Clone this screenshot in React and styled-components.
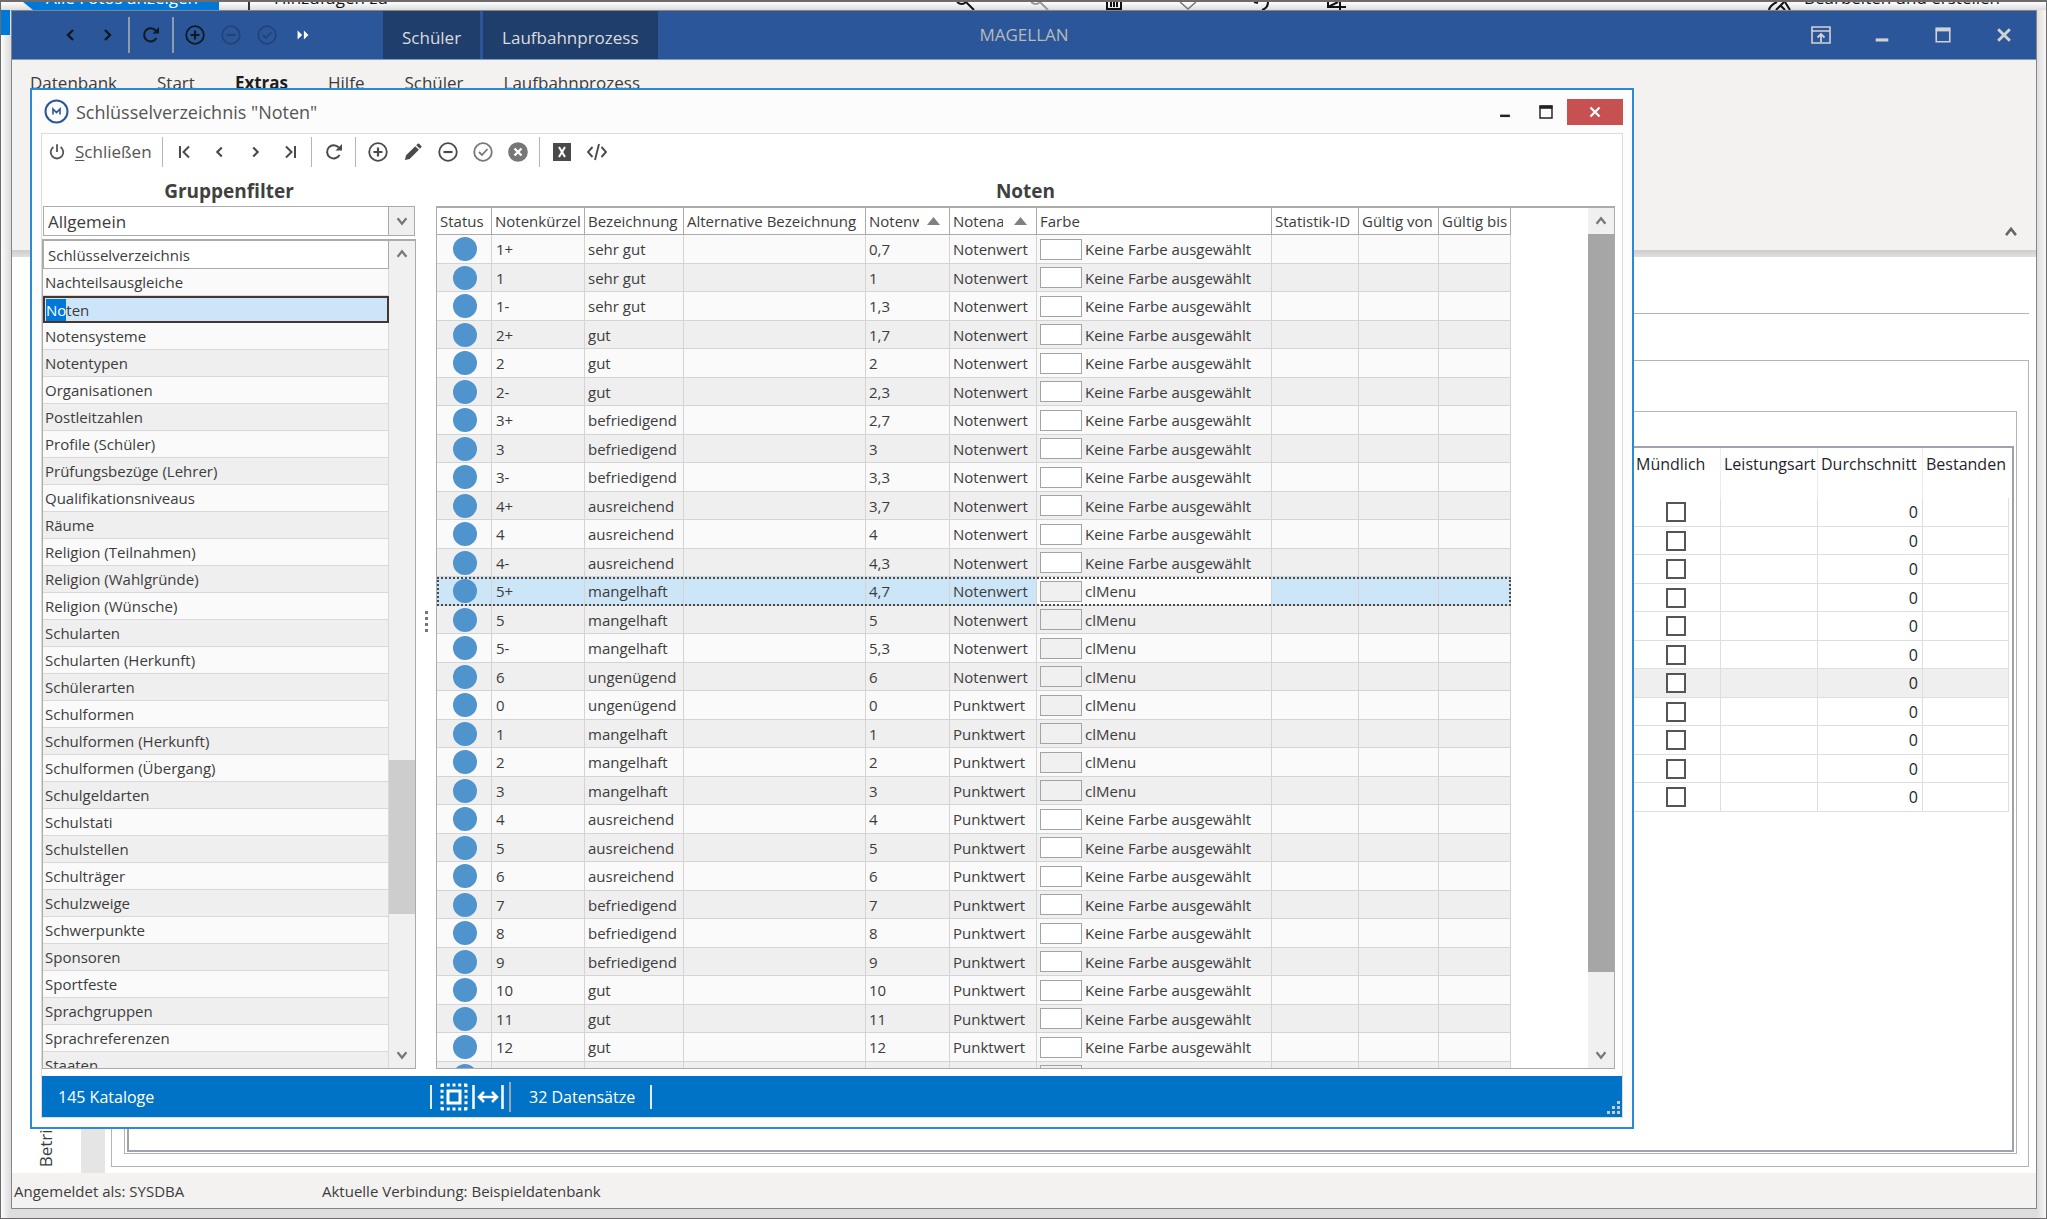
import React from "react";
import styled, { createGlobalStyle, css } from "styled-components";

const GlobalStyle = createGlobalStyle`
  * {
    box-sizing: border-box;
  }
  body {
    margin: 0;
    overflow: hidden;
    font-family: "Open Sans", "Noto Sans", sans-serif;
    font-size: 17px;
    color: #3c3c3c;
  }
  button, select, input {
    font: inherit;
    color: inherit;
    margin: 0;
  }
  button {
    border: 0;
    padding: 0;
    background: none;
  }
`;

/* ---------- desktop + photo app behind ---------- */

const Desktop = styled.div`
  position: relative;
  display: flex;
  flex-direction: column;
  height: 100vh;
  padding: 0 9px 9px 10px;
  border: 1px solid #6f6b6c;
  border-top-width: 2px;
  background: linear-gradient(to right, #fdfdfd, #dedede 9px, #dedede calc(100% - 9px), #f7f7f7);
`;

const PhotoBar = styled.div`
  display: flex;
  align-items: flex-end;
  height: 8px;
  margin: 0 -9px 0 -10px;
  padding-left: 22px;
  overflow: hidden;
  color: #111;
  line-height: 24px;
  background: linear-gradient(#ffffff, #dcdcdc);
`;

const PhotoAll = styled.span`
  width: 186px;
  padding-left: 13px;
  color: #fff;
  background: #0078d7;
`;

const PhotoAdd = styled.span`
  margin-left: 29px;
  padding-left: 24px;
  border-left: 2px solid #333;
`;

const PhotoTools = styled.span`
  display: flex;
  align-items: flex-end;
  gap: 50px;
  margin: 0 auto 0 auto;
  padding-left: 146px;
`;

const PhotoEdit = styled.span`
  display: flex;
  align-items: flex-end;
  gap: 12px;
  padding-right: 46px;
`;

const PhotoEdge = styled.div`
  position: absolute;
  left: 0;
  top: 8px;
  width: 9px;
  height: 25px;
  background: #0078d7;
`;

/* ---------- main window ---------- */

const MainWindow = styled.div`
  flex: 1;
  min-height: 0;
  display: flex;
  flex-direction: column;
  border: 1px solid #858585;
  background: #fff;
`;

const TitleBar = styled.header`
  display: grid;
  grid-template-columns: 1fr auto 1fr;
  align-items: stretch;
  height: 49px;
  background: #2b579a;
  border-bottom: 1px solid #7f9cc9;
  color: #b9b9b9;
`;

const QuickBar = styled.div`
  display: flex;
  align-items: center;
  padding-left: 41px;
  color: #101820;
`;

const QuickButton = styled.button`
  display: flex;
  justify-content: center;
  align-items: center;
  width: 36px;
  height: 36px;
  color: ${p => (p.$light ? "#fff" : "inherit")};
  opacity: ${p => (p.$off ? 0.3 : 1)};
`;

const QuickSep = styled.span`
  width: 2px;
  height: 36px;
  margin: 0 3px;
  background: #8e9bb0;
`;

const ContextTabs = styled.div`
  display: flex;
  align-self: stretch;
  gap: 3px;
  margin-left: 62px;
`;

const ContextTab = styled.button`
  padding: 4px 19px 0;
  color: #dcdcdc;
  background: #1f3e6c;
`;

const AppTitle = styled.span`
  align-self: center;
  line-height: 24px;
`;

const WindowButtons = styled.div`
  display: flex;
  justify-content: flex-end;
  align-items: center;
  padding-right: 2px;
  color: #d2d2d2;
`;

const WindowButton = styled.button`
  display: flex;
  justify-content: center;
  align-items: center;
  width: 61px;
  height: 36px;
`;

const Ribbon = styled.div`
  display: flex;
  justify-content: space-between;
  align-items: flex-end;
  height: 190px;
  padding-right: 16px;
  background: #f3f2f1;
`;

const RibbonMenu = styled.nav`
  display: flex;
  align-self: flex-start;
  gap: 40px;
  padding: 11px 0 0 18px;
  line-height: 24px;
`;

const MenuButton = styled.button`
  font-weight: ${p => (p.$active ? 700 : 400)};
  color: ${p => (p.$active ? "#1e1e1e" : "#3c3c3c")};
`;

const CollapseButton = styled.button`
  color: #666;
  margin-bottom: 4px;
`;

const RibbonShadow = styled.div`
  height: 7px;
  background: linear-gradient(#cdcdcd, #e0e0e0);
`;

const Work = styled.main`
  flex: 1;
  min-height: 0;
  display: flex;
`;

const SideTabs = styled.div`
  display: flex;
  align-items: flex-end;
  justify-content: flex-end;
  width: 93px;
  border-right: 24px solid #e5e5e5;
`;

const SideTab = styled.button`
  writing-mode: vertical-rl;
  transform: rotate(180deg);
  margin: 0 24px 6px 0;
  font-size: 17px;
  line-height: 22px;
`;

const Panels = styled.div`
  flex: 1;
  display: flex;
  flex-direction: column;
  padding: 0 7px 6px 6px;
`;

const Divider = styled.div`
  height: 57px;
  border-bottom: 1px solid #b4b4b4;
`;

const OuterPanel = styled.div`
  flex: 1;
  display: flex;
  margin-top: 46px;
  padding: 50px 11px 12px 12px;
  border: 1px solid #b4b4b4;
`;

const InnerPanel = styled.div`
  flex: 1;
  display: flex;
  padding: 34px 2px 1px;
  border: 1px solid #b4b4b4;
`;

const GradePanel = styled.div`
  flex: 1;
  display: flex;
  justify-content: flex-end;
  align-items: flex-start;
  padding-right: 3px;
  border: 2px solid #9ea2aa;
`;

const BackTable = styled.table`
  table-layout: fixed;
  width: 381px;
  border-spacing: 0;
  font-size: 16px;
  line-height: 20px;
  color: #1f1f2b;

  th {
    height: 50px;
    padding: 6px 0 0 3px;
    font-weight: 400;
    text-align: left;
    vertical-align: top;
    white-space: nowrap;
    border-right: 1px solid #ececec;
  }
  th:first-child {
    padding-left: 8px;
  }
  th:last-child {
    border-right: 0;
  }
  td {
    height: 29px;
    padding: 0 4px;
    text-align: right;
    border-right: 1px solid #dedede;
    border-bottom: 1px solid #dedede;
  }
  td:first-child {
    text-align: center;
  }
  tbody tr:nth-child(even) td {
    height: 28px;
  }
  tbody tr:nth-child(7) td {
    background: #efefef;
  }
`;

const Tick = styled.input`
  appearance: none;
  display: block;
  width: 20px;
  height: 20px;
  margin: 0 0 0 34px;
  border: 2px solid #555;
  background: #fff;
`;

const MainStatus = styled.footer`
  display: grid;
  grid-template-columns: 308px 1fr;
  align-items: center;
  height: 35px;
  padding-left: 2px;
  background: #f3f2f1;
  font-size: 15px;
`;

/* ---------- dialog ---------- */

const Dialog = styled.section`
  position: absolute;
  inset: 86px 412px 89px 29px;
  display: flex;
  flex-direction: column;
  padding: 0 9px 9px;
  border: 2px solid #2b8ad6;
  background: #fcfcfc;
`;

const DialogTitle = styled.header`
  display: flex;
  align-items: center;
  height: 43px;
  padding-left: 3px;
  color: #555;

  h1 {
    flex: 1;
    margin: 0 0 0 7px;
    font-size: 18px;
    font-weight: 400;
  }
`;

const DialogButton = styled.button`
  display: flex;
  justify-content: center;
  align-items: center;
  width: 41px;
  height: 26px;
  color: #222;
`;

const CloseButton = styled(DialogButton)`
  width: 56px;
  margin-left: 1px;
  background: #c75050;
  color: #fff;
`;

const DialogBody = styled.div`
  flex: 1;
  min-height: 0;
  display: flex;
  flex-direction: column;
  border: 1px solid #dcdcdc;
  background: #fff;
`;

const Toolbar = styled.div`
  display: flex;
  align-items: center;
  height: 35px;
  color: #4a4a4a;
`;

const LeaveButton = styled.button`
  display: flex;
  align-items: center;
  gap: 9px;
  width: 116px;
  padding-left: 6px;
  color: #555;

  u {
    text-underline-offset: 2px;
  }
`;

const ToolButton = styled.button`
  display: flex;
  justify-content: center;
  align-items: center;
  width: 35px;
  height: 30px;
  opacity: ${p => (p.$off ? 0.75 : 1)};
`;

const ToolSep = styled.span`
  width: 1px;
  height: 30px;
  margin: 0 4px;
  background: #b5b5b5;
`;

const Columns = styled.div`
  flex: 1;
  min-height: 0;
  display: grid;
  grid-template-columns: 374px 20px 1fr;
  padding: 0 7px 7px 0;
`;

const Column = styled.div`
  display: flex;
  flex-direction: column;
  min-width: 0;
  min-height: 0;
`;

const Heading = styled.h2`
  margin: 0;
  padding-top: 10px;
  height: 37px;
  font-size: 19px;
  line-height: 24px;
  text-align: center;
  color: #404040;
`;

const Combo = styled.div`
  display: flex;
  height: 30px;
  margin: 0 1px 3px;
  border: 1px solid #ababab;

  select {
    flex: 1;
    appearance: none;
    padding: 0 4px;
    border: 0;
    background: #fff;
  }
  span {
    display: flex;
    justify-content: center;
    align-items: center;
    width: 26px;
    border-left: 1px solid #ababab;
    background: #efefef;
    color: #777;
  }
`;

const ScrollBox = styled.div`
  flex: 1;
  min-height: 0;
  display: flex;
  border: 1px solid #ababab;
  border-top-width: 2px;
`;

const Viewport = styled.div`
  flex: 1;
  min-width: 0;
  overflow: hidden;
`;

const ScrollBar = styled.div`
  display: grid;
  grid-template-rows: 26px ${p => p.$before}fr ${p => p.$size}fr ${p => p.$after}fr 26px;
  width: 26px;
  background: #f0f0f0;
  color: #777;

  button {
    display: flex;
    justify-content: center;
    align-items: center;
  }
  button:last-child {
    grid-row: 5;
  }
`;

const Thumb = styled.div`
  grid-row: 3;
  background: ${p => (p.$dark ? "#a6a6a6" : "#cdcdcd")};
`;

const GroupTable = styled.table`
  width: 100%;
  border-spacing: 0;
  font-size: 15px;
  line-height: 20px;

  th {
    height: 28px;
    padding: 0 4px;
    font-weight: 400;
    text-align: left;
    border: 1px solid #ababab;
    border-top: 0;
  }
`;

const GroupCell = styled.td`
  height: 27px;
  padding: 0 2px;
  border: 1px solid #d9d9d9;
  border-width: 0 1px 1px 0;
  background: ${p => (p.$odd ? "#efefef" : "#fafafa")};
  ${p =>
    p.$active &&
    css`
      padding: 0 1px;
      border: 2px solid #46362e;
      background: #cde5f8;
    `}

  mark {
    padding: 1px 0;
    color: #fff;
    background: #0078d7;
  }
`;

const Splitter = styled.div`
  display: flex;
  flex-direction: column;
  justify-content: center;
  align-items: center;
  gap: 3px;
  padding-top: 4px;

  i {
    width: 3px;
    height: 3px;
    background: #777;
  }
`;

const GradeTable = styled.table`
  table-layout: fixed;
  width: 1074px;
  border-spacing: 0;
  font-size: 15px;
  line-height: 20px;
  white-space: nowrap;

  th {
    height: 27px;
    padding: 0 2px 0 3px;
    font-weight: 400;
    text-align: left;
    border-right: 1px solid #ababab;
    border-bottom: 1px solid #ababab;
  }
`;

const GradeRow = styled.tr`
  background: ${p => (p.$odd ? "#efefef" : "#fafafa")};
  ${p =>
    p.$active &&
    css`
      background: #cde6f7;
      outline: 2px dotted #4a4a4a;
      outline-offset: -2px;
    `}

  td {
    height: ${p => (p.$odd ? 28 : 29)}px;
    padding: 0 2px 0 3px;
    border-right: 1px solid #d4d4d4;
    border-bottom: 1px solid #d4d4d4;
  }
  td:nth-child(2) {
    padding-left: 4px;
  }
  td:nth-child(7) {
    background: ${p => (p.$active ? "#fafafa" : "transparent")};
  }
`;

const Dot = styled.span`
  display: block;
  width: 24px;
  height: 24px;
  margin: 0 auto;
  border-radius: 50%;
  background: #4f94cd;
`;

const Sorted = styled.span`
  display: flex;
  align-items: center;
  justify-content: space-between;
  padding-right: 7px;

  span {
    width: 50px;
    overflow: hidden;
  }
`;

const Colour = styled.span`
  display: flex;
  align-items: center;
  gap: 3px;
`;

const Swatch = styled.span`
  width: 42px;
  height: 21px;
  border: 1px solid #a3a3a3;
  background: ${p => (p.$menu ? "#f0f0f0" : "#fff")};
`;

const DialogStatus = styled.footer`
  display: flex;
  align-items: center;
  height: 41px;
  padding-left: 16px;
  background: #0173c7;
  color: #fff;
  font-size: 16px;
`;

const Total = styled.span`
  width: ${p => p.$width}px;
  padding-left: ${p => p.$indent || 0}px;
`;

const StatusSep = styled.span`
  width: 2px;
  height: ${p => (p.$tall ? 30 : 24)}px;
  background: ${p => (p.$tall ? "#9aa7b2" : "#e3eef8")};
`;

const StatusButton = styled.button`
  display: flex;
  margin-left: ${p => p.$gap}px;
`;

const Grip = styled.span`
  display: flex;
  align-self: flex-end;
  margin: 0 2px 3px auto;
`;

/* ---------- icons ---------- */

const ICONS = {
  left: <path d="M12 5l-5 5 5 5" strokeWidth="2.4" />,
  right: <path d="M8 5l5 5-5 5" strokeWidth="2.4" />,
  up: <path d="M4.500 13.500l5.500-7 5.500 7" strokeWidth="2.800" />,
  down: <path d="M4.500 6.500l5.500 7 5.500-7" strokeWidth="2.800" />,
  first: <path d="M5 4v12M14 4.500l-5.500 5.500 5.500 5.500" strokeWidth="2" />,
  last: <path d="M15 4v12M6 4.500l5.500 5.500-5.500 5.500" strokeWidth="2" />,
  refresh: (
    <>
      <path d="M15.500 13a6.600 6.600 0 1 1-.8-7.500" strokeWidth="2" />
      <path d="M18 2v6.500h-6.500z" fill="currentColor" stroke="none" />
    </>
  ),
  plus: (
    <>
      <circle cx="10" cy="10" r="8.800" />
      <path d="M10 5.500v9M5.500 10h9" strokeWidth="2.200" />
    </>
  ),
  minus: (
    <>
      <circle cx="10" cy="10" r="8.800" />
      <path d="M5.500 10h9" strokeWidth="2.200" />
    </>
  ),
  check: (
    <>
      <circle cx="10" cy="10" r="8.800" />
      <path d="M6 10l3 3 5.500-6" />
    </>
  ),
  cancel: (
    <>
      <circle cx="10" cy="10" r="9.800" fill="currentColor" stroke="none" />
      <path d="M6.500 6.500l7 7M13.500 6.500l-7 7" stroke="#fff" strokeWidth="2.400" />
    </>
  ),
  pencil: (
    <path
      d="M1 19l1.300-5.300L12.500 3.500l4 4L6.300 17.700zM13.600 2.400l1.600-1.600q.8-.6 1.600 0l2.400 2.400q.6.8 0 1.600l-1.600 1.600z"
      fill="currentColor"
      stroke="none"
    />
  ),
  power: (
    <>
      <path d="M6 4.500a7 7 0 1 0 8 0" strokeWidth="2" />
      <path d="M10 1.500v8.500" strokeWidth="2" />
    </>
  ),
  excel: (
    <>
      <rect x="1" y="1" width="18" height="18" fill="currentColor" stroke="none" />
      <path d="M7 5l6 10M13 5L7 15" stroke="#fff" strokeWidth="2" />
    </>
  ),
  code: <path d="M5.500 5L1 10l4.500 5M14.500 5l4.500 5-4.500 5M12 2L8 18" strokeWidth="1.900" />,
  more: <path d="M4 5l5 5-5 5zM11 5l5 5-5 5z" fill="currentColor" stroke="none" />,
  pin: (
    <>
      <path d="M1 2h18v16H1zM1 6h18" strokeWidth="1.600" />
      <path d="M10 17V9M6.500 12.500L10 9l3.500 3.500" />
    </>
  ),
  min: <path d="M3 15.500h14" strokeWidth="3.500" />,
  max: (
    <>
      <path d="M2.500 2.500h15v15h-15z" strokeWidth="1.800" />
      <path d="M2 4h16" strokeWidth="4" />
    </>
  ),
  close: <path d="M3.500 3.500l13 13M16.500 3.500l-13 13" strokeWidth="3.200" />,
};

const Icon = ({ name, size = 20 }) => (
  <svg width={size} height={size} viewBox="0 0 20 20" fill="none" stroke="currentColor" strokeWidth="1.800" aria-hidden="true">
    {ICONS[name]}
  </svg>
);

const Logo = () => (
  <svg width="25" height="25" viewBox="0 0 25 25" fill="none" stroke="#2b579a" aria-hidden="true">
    <circle cx="12.500" cy="12.500" r="11" strokeWidth="2" />
    <path d="M9 15.500V10l3.500 3.500L16 10v5.500" strokeWidth="1.600" />
  </svg>
);

/* ---------- data ---------- */

const GROUPS = [
  "Nachteilsausgleiche",
  "Noten",
  "Notensysteme",
  "Notentypen",
  "Organisationen",
  "Postleitzahlen",
  "Profile (Schüler)",
  "Prüfungsbezüge (Lehrer)",
  "Qualifikationsniveaus",
  "Räume",
  "Religion (Teilnahmen)",
  "Religion (Wahlgründe)",
  "Religion (Wünsche)",
  "Schularten",
  "Schularten (Herkunft)",
  "Schülerarten",
  "Schulformen",
  "Schulformen (Herkunft)",
  "Schulformen (Übergang)",
  "Schulgeldarten",
  "Schulstati",
  "Schulstellen",
  "Schulträger",
  "Schulzweige",
  "Schwerpunkte",
  "Sponsoren",
  "Sportfeste",
  "Sprachgruppen",
  "Sprachreferenzen",
  "Staaten",
];

// Kürzel, Bezeichnung, Notenwert
const GRADES = [
  ["1+", "sehr gut", "0,7"],
  ["1", "sehr gut", "1"],
  ["1-", "sehr gut", "1,3"],
  ["2+", "gut", "1,7"],
  ["2", "gut", "2"],
  ["2-", "gut", "2,3"],
  ["3+", "befriedigend", "2,7"],
  ["3", "befriedigend", "3"],
  ["3-", "befriedigend", "3,3"],
  ["4+", "ausreichend", "3,7"],
  ["4", "ausreichend", "4"],
  ["4-", "ausreichend", "4,3"],
  ["5+", "mangelhaft", "4,7"],
  ["5", "mangelhaft", "5"],
  ["5-", "mangelhaft", "5,3"],
  ["6", "ungenügend", "6"],
  ["0", "ungenügend", "0"],
  ["1", "mangelhaft", "1"],
  ["2", "mangelhaft", "2"],
  ["3", "mangelhaft", "3"],
  ["4", "ausreichend", "4"],
  ["5", "ausreichend", "5"],
  ["6", "ausreichend", "6"],
  ["7", "befriedigend", "7"],
  ["8", "befriedigend", "8"],
  ["9", "befriedigend", "9"],
  ["10", "gut", "10"],
  ["11", "gut", "11"],
  ["12", "gut", "12"],
  ["", "", ""],
];

const SELECTED = 12;
const COLUMN_WIDTHS = [55, 93, 99, 182, 84, 87, 235, 87, 80, 72];
const BACK_WIDTHS = [93, 97, 105, 86];
const MENU = ["Datenbank", "Start", "Extras", "Hilfe", "Schüler", "Laufbahnprozess"];

/* ---------- parts ---------- */

const Photos = () => (
  <PhotoBar>
    <svg width="10" height="8" viewBox="0 0 10 8">
      <path d="M0 0h10v8z" fill="#0078d7" />
    </svg>
    <PhotoAll>Alle Fotos anzeigen</PhotoAll>
    <PhotoAdd>Hinzufügen zu</PhotoAdd>
    <PhotoTools>
      <svg width="24" height="8" fill="none" stroke="#111" strokeWidth="2">
        <path d="M3 0q5 4 9 0M12 0l8 8" />
      </svg>
      <svg width="24" height="8" fill="none" stroke="#999" strokeWidth="2">
        <path d="M3 0q5 4 9 0M12 0l8 8" />
      </svg>
      <svg width="24" height="8" fill="none" stroke="#111" strokeWidth="2">
        <path d="M5 0v7h14V0M9 0v5M12 0v5M15 0v5" />
      </svg>
      <svg width="24" height="8" fill="none" stroke="#777" strokeWidth="1.500">
        <path d="M4 0l8 7 8-7" />
      </svg>
      <svg width="24" height="8" fill="none" stroke="#111" strokeWidth="2">
        <path d="M4 0l4 1M18 0q0 6-6 8" />
      </svg>
      <svg width="24" height="8" fill="none" stroke="#111" strokeWidth="2">
        <path d="M4 0v5h18M16 0v8M4 5l10-5" />
      </svg>
    </PhotoTools>
    <PhotoEdit>
      <svg width="24" height="8" fill="none" stroke="#111" strokeWidth="2">
        <path d="M1 8q1-5 8-8M8 8l8-8M12 3l5 5M17 0l5 8" />
      </svg>
      Bearbeiten und erstellen
    </PhotoEdit>
  </PhotoBar>
);

const BackGrid = () => (
  <BackTable>
    <colgroup>
      {BACK_WIDTHS.map(w => <col key={w} width={w} />)}
    </colgroup>
    <thead>
      <tr>
        <th>Mündlich</th>
        <th>Leistungsart</th>
        <th>Durchschnitt</th>
        <th>Bestanden</th>
      </tr>
    </thead>
    <tbody>
      {Array.from({ length: 11 }, (_, i) => (
        <tr key={i}>
          <td><Tick type="checkbox" aria-label="Mündlich" /></td>
          <td />
          <td>0</td>
          <td />
        </tr>
      ))}
    </tbody>
  </BackTable>
);

const Scroller = ({ before, size, after, dark }) => (
  <ScrollBar $before={before} $size={size} $after={after}>
    <button aria-label="Nach oben"><Icon name="up" size={16} /></button>
    <Thumb $dark={dark} />
    <button aria-label="Nach unten"><Icon name="down" size={16} /></button>
  </ScrollBar>
);

const Groups = () => (
  <Column>
    <Heading>Gruppenfilter</Heading>
    <Combo>
      <select aria-label="Gruppenfilter" defaultValue="Allgemein">
        <option>Allgemein</option>
      </select>
      <span><Icon name="down" size={16} /></span>
    </Combo>
    <ScrollBox>
      <Viewport>
        <GroupTable>
          <thead>
            <tr><th>Schlüsselverzeichnis</th></tr>
          </thead>
          <tbody>
            {GROUPS.map((name, i) => (
              <tr key={name}>
                <GroupCell $odd={i % 2 === 1} $active={name === "Noten"}>
                  {name === "Noten" ? <><mark>No</mark>ten</> : name}
                </GroupCell>
              </tr>
            ))}
          </tbody>
        </GroupTable>
      </Viewport>
      <Scroller before={494} size={154} after={128} />
    </ScrollBox>
  </Column>
);

const Grades = () => (
  <Column>
    <Heading>Noten</Heading>
    <ScrollBox>
      <Viewport>
        <GradeTable>
          <colgroup>
            {COLUMN_WIDTHS.map((w, i) => <col key={i} width={w} />)}
          </colgroup>
          <thead>
            <tr>
              <th>Status</th>
              <th>Notenkürzel</th>
              <th>Bezeichnung</th>
              <th>Alternative Bezeichnung</th>
              <th>
                <Sorted>
                  <span>Notenwert</span>
                  <svg width="13" height="8"><path d="M0 8l6.500-8L13 8z" fill="#808080" /></svg>
                </Sorted>
              </th>
              <th>
                <Sorted>
                  <span>Notenart</span>
                  <svg width="13" height="8"><path d="M0 8l6.500-8L13 8z" fill="#808080" /></svg>
                </Sorted>
              </th>
              <th>Farbe</th>
              <th>Statistik-ID</th>
              <th>Gültig von</th>
              <th>Gültig bis</th>
            </tr>
          </thead>
          <tbody>
            {GRADES.map(([code, label, value], i) => {
              const menu = (i >= 12 && i < 20) || i === 29;
              return (
                <GradeRow key={i} $odd={i % 2 === 1} $active={i === SELECTED}>
                  <td><Dot /></td>
                  <td>{code}</td>
                  <td>{label}</td>
                  <td />
                  <td>{value}</td>
                  <td>{code && (i < 16 ? "Notenwert" : "Punktwert")}</td>
                  <td>
                    <Colour>
                      <Swatch $menu={menu} />
                      {code && (menu ? "clMenu" : "Keine Farbe ausgewählt")}
                    </Colour>
                  </td>
                  <td />
                  <td />
                  <td />
                </GradeRow>
              );
            })}
          </tbody>
        </GradeTable>
      </Viewport>
      <Scroller before={0} size={734} after={70} dark />
    </ScrollBox>
  </Column>
);

const KeyDialog = () => (
  <Dialog>
    <DialogTitle>
      <Logo />
      <h1>Schlüsselverzeichnis "Noten"</h1>
      <DialogButton aria-label="Minimieren"><Icon name="min" size={14} /></DialogButton>
      <DialogButton aria-label="Maximieren"><Icon name="max" size={16} /></DialogButton>
      <CloseButton aria-label="Schließen"><Icon name="close" size={14} /></CloseButton>
    </DialogTitle>
    <DialogBody>
      <Toolbar>
        <LeaveButton>
          <Icon name="power" size={18} />
          <span><u>S</u>chließen</span>
        </LeaveButton>
        <ToolSep />
        <ToolButton aria-label="Erster"><Icon name="first" /></ToolButton>
        <ToolButton aria-label="Vorheriger"><Icon name="left" size={18} /></ToolButton>
        <ToolButton aria-label="Nächster"><Icon name="right" size={18} /></ToolButton>
        <ToolButton aria-label="Letzter"><Icon name="last" /></ToolButton>
        <ToolSep />
        <ToolButton aria-label="Aktualisieren"><Icon name="refresh" /></ToolButton>
        <ToolSep />
        <ToolButton aria-label="Hinzufügen"><Icon name="plus" /></ToolButton>
        <ToolButton aria-label="Bearbeiten"><Icon name="pencil" size={18} /></ToolButton>
        <ToolButton aria-label="Entfernen"><Icon name="minus" /></ToolButton>
        <ToolButton aria-label="Speichern" $off><Icon name="check" /></ToolButton>
        <ToolButton aria-label="Abbrechen" $off><Icon name="cancel" /></ToolButton>
        <ToolSep />
        <ToolButton aria-label="Excel"><Icon name="excel" /></ToolButton>
        <ToolButton aria-label="XML"><Icon name="code" /></ToolButton>
      </Toolbar>
      <Columns>
        <Groups />
        <Splitter><i /><i /><i /><i /></Splitter>
        <Grades />
      </Columns>
      <DialogStatus>
        <Total $width={372}>145 Kataloge</Total>
        <StatusSep />
        <StatusButton $gap={8} aria-label="Alles auswählen">
          <svg width="28" height="28" viewBox="0 0 28 28" fill="none" stroke="#fff">
            <rect x="8" y="8" width="12" height="12" strokeWidth="3" />
            <path d="M1 2h26M1 26h26M2 1v26M26 1v26" strokeWidth="3" strokeDasharray="3 2.750" />
          </svg>
        </StatusButton>
        <StatusButton $gap={4} aria-label="Spaltenbreite">
          <svg width="32" height="28" viewBox="0 0 32 28" fill="none" stroke="#fff" strokeWidth="2.500">
            <path d="M1.500 2v24M30.500 2v24M7 14h18M12 9l-5 5 5 5M20 9l5 5-5 5" />
          </svg>
        </StatusButton>
        <Total $width={5} />
        <StatusSep $tall />
        <Total $width={139} $indent={18}>32 Datensätze</Total>
        <StatusSep />
        <Grip>
          <svg width="13" height="13" fill="#c4cdd6">
            <path d="M10 0h3v3h-3zM10 5h3v3h-3zM5 5h3v3H5zM10 10h3v3h-3zM5 10h3v3H5zM0 10h3v3H0z" />
          </svg>
        </Grip>
      </DialogStatus>
    </DialogBody>
  </Dialog>
);

export default () => (
  <Desktop>
    <GlobalStyle />
    <Photos />
    <PhotoEdge />
    <MainWindow>
      <TitleBar>
        <QuickBar>
          <QuickButton aria-label="Zurück"><Icon name="left" /></QuickButton>
          <QuickButton aria-label="Vor"><Icon name="right" /></QuickButton>
          <QuickSep />
          <QuickButton aria-label="Aktualisieren"><Icon name="refresh" /></QuickButton>
          <QuickSep />
          <QuickButton aria-label="Neu"><Icon name="plus" /></QuickButton>
          <QuickButton aria-label="Löschen" $off><Icon name="minus" /></QuickButton>
          <QuickButton aria-label="Speichern" $off><Icon name="check" /></QuickButton>
          <QuickButton aria-label="Mehr" $light><Icon name="more" size={18} /></QuickButton>
          <ContextTabs>
            <ContextTab>Schüler</ContextTab>
            <ContextTab>Laufbahnprozess</ContextTab>
          </ContextTabs>
        </QuickBar>
        <AppTitle>MAGELLAN</AppTitle>
        <WindowButtons>
          <WindowButton aria-label="Menüband"><Icon name="pin" /></WindowButton>
          <WindowButton aria-label="Minimieren"><Icon name="min" size={18} /></WindowButton>
          <WindowButton aria-label="Maximieren"><Icon name="max" size={18} /></WindowButton>
          <WindowButton aria-label="Schließen"><Icon name="close" size={18} /></WindowButton>
        </WindowButtons>
      </TitleBar>
      <Ribbon>
        <RibbonMenu>
          {MENU.map(m => <MenuButton key={m} $active={m === "Extras"}>{m}</MenuButton>)}
        </RibbonMenu>
        <CollapseButton aria-label="Menüband reduzieren"><Icon name="up" size={18} /></CollapseButton>
      </Ribbon>
      <RibbonShadow />
      <Work>
        <SideTabs>
          <SideTab>Betriebe</SideTab>
        </SideTabs>
        <Panels>
          <Divider />
          <OuterPanel>
            <InnerPanel>
              <GradePanel>
                <BackGrid />
              </GradePanel>
            </InnerPanel>
          </OuterPanel>
        </Panels>
      </Work>
      <MainStatus>
        <span>Angemeldet als: SYSDBA</span>
        <span>Aktuelle Verbindung: Beispieldatenbank</span>
      </MainStatus>
    </MainWindow>
    <KeyDialog />
  </Desktop>
);
